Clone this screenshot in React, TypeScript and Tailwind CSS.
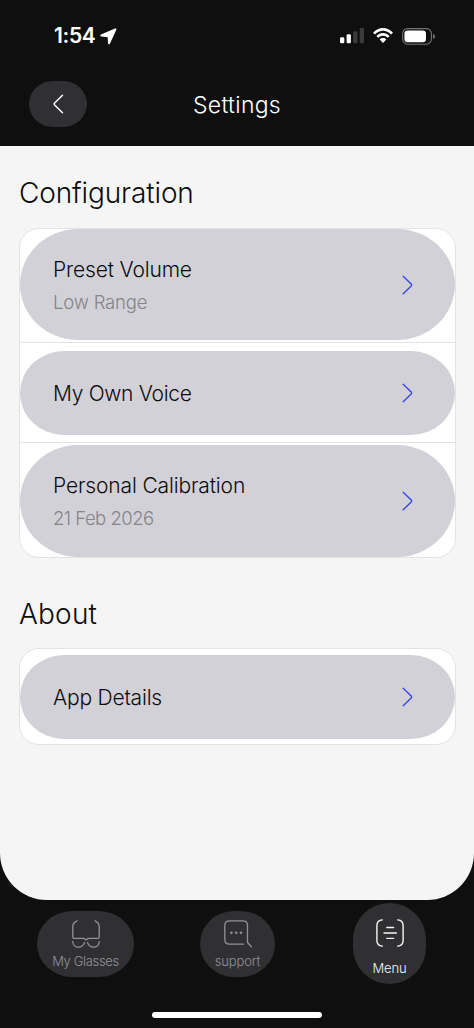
import clsx from 'clsx'
import type { ReactNode } from 'react'

interface RowProps {
  title: string
  detail?: string
  className: string
  titleClass: string
  detailClass?: string
}

function SettingsRow({ title, detail, className, titleClass, detailClass }: RowProps) {
  return (
    <button
      className={clsx(
        'flex w-full shrink-0 items-center justify-between bg-[#d2d1d7] pl-[33px] pr-[42px] text-left',
        className
      )}
    >
      <span className="flex flex-col pt-px">
        <span className={clsx('text-[21px] leading-[26px] whitespace-nowrap text-[#0c0c0e]', titleClass)}>{title}</span>
        {detail && (
          <span className={clsx('mt-[7px] text-[18.5px] leading-[24px] whitespace-nowrap text-[#858488]', detailClass)}>
            {detail}
          </span>
        )}
      </span>
      <svg width="11" height="20" viewBox="0 0 11 20" fill="none" stroke="#3440ee" strokeWidth="1.3" strokeLinecap="round">
        <path d="M1.2 1.2 9.4 9.3Q10 10 9.4 10.7L1.2 18.8" />
      </svg>
    </button>
  )
}

function StatusBar() {
  return (
    <div className="flex h-[72px] items-center justify-between pl-[54px] pr-[39px] text-white">
      <div className="flex items-center gap-[5px]">
        <span className="text-[21px] leading-[24px] font-semibold tracking-[-0.35px]">1:54</span>
        <svg width="17" height="17" viewBox="0 0 17 17" fill="white" stroke="white" strokeWidth="2" strokeLinejoin="round">
          <path d="M15.4 1.3 1.4 7.5 8.6 8.3 9 15.3Z" />
        </svg>
      </div>
      <div className="flex items-center">
        <svg width="24" height="16" viewBox="0 0 24 16" fill="white">
          <rect x="0" y="9.2" width="4.3" height="6.1" rx="1.3" />
          <rect x="6.6" y="6.3" width="4.3" height="9" rx="1.3" />
          <rect x="13.2" y="3.2" width="4.3" height="12.1" rx="1.3" fill="#3b3b3d" />
          <rect x="19.7" y="0" width="4.3" height="15.3" rx="1.3" fill="#3b3b3d" />
        </svg>
        <svg className="ml-[9px]" width="20" height="16" viewBox="0 0 20 16" fill="white">
          <path d="M0 4.8C5.4-1.6 14.6-1.6 20 4.8L18 6.6C13.5 1.6 6.5 1.6 2 6.6Z" />
          <path d="M3.4 8C7 4 13 4 16.6 8L14.7 9.8C12 7 8 7 5.3 9.8Z" />
          <path d="M6.7 11.4C8.4 9.5 11.6 9.5 13.3 11.4L10.5 14.6Q10 15.2 9.5 14.6Z" />
        </svg>
        <svg className="ml-[9px]" width="33" height="17" viewBox="0 0 33 17" fill="none">
          <rect x=".6" y=".6" width="28.8" height="15.6" rx="5" stroke="#747476" strokeWidth="1.1" />
          <rect x="2.4" y="2.6" width="21.6" height="11.6" rx="3.3" fill="white" />
          <path d="M31 6Q33 6.5 33 8.4T31 10.8Z" fill="#747476" />
        </svg>
      </div>
    </div>
  )
}

interface TabProps {
  label: string
  className: string
  labelClass: string
  children: ReactNode
}

function Tab({ label, className, labelClass, children }: TabProps) {
  return (
    <button className={clsx('flex shrink-0 flex-col items-center bg-[#303033]', className)}>
      {children}
      <span className={clsx('text-[13px] leading-[16px] whitespace-nowrap', labelClass)}>{label}</span>
    </button>
  )
}

function TabBar() {
  return (
    <nav className="flex h-[84px] items-center pl-[37px] pt-[3px]">
      <Tab
        label="My Glasses"
        className="h-[66px] w-[97px] rounded-[35px/33px] pt-[9px] text-[#929196]"
        labelClass="mt-[5px] tracking-[-0.35px]"
      >
        <svg width="28" height="28" viewBox="0 0 28 28" fill="none" stroke="currentColor" strokeWidth="1.3" strokeLinecap="round">
          <path d="M5 .8C2.8 1.8.8 4 .8 6.5V17.2Q.8 18.4 2 18.4H11.6Q12.6 18.4 13 19.2Q14 20.2 15 19.2Q15.4 18.4 16.4 18.4H26Q27.2 18.4 27.2 17.2V6.5C27.2 4 25.2 1.8 23 .8" />
          <path d="M.8 21.5C.8 25 3.4 27.2 6.6 27.2 9.8 27.2 11.4 25.4 12.6 22.5M27.2 21.5C27.2 25 24.6 27.2 21.4 27.2 18.2 27.2 16.6 25.4 15.4 22.5" />
        </svg>
      </Tab>
      <Tab
        label="support"
        className="ml-[66px] h-[66px] w-[75px] rounded-[34px/33px] pt-[9px] text-[#929196]"
        labelClass="mt-[5px] tracking-[-0.15px]"
      >
        <svg width="28" height="28" viewBox="0 0 28 28" fill="none" stroke="currentColor" strokeWidth="1.3" strokeLinecap="round">
          <path d="M19.5 24.2H5.5Q.8 24.2.8 19.5V5.5Q.8.8 5.5.8H18.8Q23.5.8 23.5 5.5V22.4L27.4 26.8" />
          <g fill="currentColor" stroke="none">
            <circle cx="7.4" cy="12.8" r="1.3" />
            <circle cx="12.2" cy="12.8" r="1.3" />
            <circle cx="17" cy="12.8" r="1.3" />
          </g>
        </svg>
      </Tab>
      <Tab
        label="Menu"
        className="ml-[78px] h-[81px] w-[73px] rounded-[36.5px] pt-[16px] text-[#f5f5f5]"
        labelClass="mt-[13px] tracking-[-0.1px]"
      >
        <svg width="28" height="28" viewBox="0 0 28 28" fill="none" stroke="currentColor" strokeWidth="1.4" strokeLinecap="round">
          <path d="M6.3.9C2.8 1.2.9 3 .9 6.5V21.5C.9 25 2.8 26.8 6.3 27.1M21.7.9C25.2 1.2 27.1 3 27.1 6.5V21.5C27.1 25 25.2 26.8 21.7 27.1" />
          <path d="M10.8 8.5H17.6M8 14H20.4M10.8 19.4H17.6" />
        </svg>
      </Tab>
    </nav>
  )
}

export default function App() {
  return (
    <div className="flex h-[1028px] w-[474px] flex-col overflow-hidden bg-[#0f0f10] font-['Inter','Liberation_Sans',sans-serif] font-[350]">
      <header className="h-[146px] shrink-0">
        <StatusBar />
        <div className="grid h-[64px] grid-cols-[1fr_auto_1fr] items-center px-[29px]">
          <button className="flex h-[46px] w-[58px] items-center justify-center rounded-[24px/23px] bg-[#303033]">
            <svg width="11" height="20" viewBox="0 0 11 20" fill="none" stroke="white" strokeWidth="1.4" strokeLinecap="round">
              <path d="M9.5 1.2 1.4 9.3Q.8 10 1.4 10.7L9.5 18.8" />
            </svg>
          </button>
          <h1 className="pt-px text-[23px] leading-[28px] tracking-[0.3px] text-white">Settings</h1>
        </div>
      </header>

      <main className="flex h-[754px] shrink-0 flex-col rounded-b-[47px] bg-[#f5f5f5] px-[19px] pt-[29px]">
        <h2 className="text-[28px] leading-[36px] tracking-[-0.13px] text-[#0c0c0e]">Configuration</h2>
        <section className="mt-[17px] flex h-[330px] w-[437px] flex-col overflow-hidden rounded-[20px] border border-[#e3e3e5] bg-white">
          <div className="h-[114px] shrink-0 border-b border-[#e3e3e5]">
            <SettingsRow
              title="Preset Volume"
              detail="Low Range"
              className="h-[111px] rounded-[58px/55.5px]"
              titleClass="tracking-[-0.17px]"
              detailClass="tracking-[-0.18px]"
            />
          </div>
          <div className="flex h-[100px] shrink-0 items-center border-b border-[#e3e3e5]">
            <SettingsRow title="My Own Voice" className="h-[84px] rounded-[44px/42px] pt-px" titleClass="tracking-[-0.3px]" />
          </div>
          <div className="flex flex-1 items-end">
            <SettingsRow
              title="Personal Calibration"
              detail="21 Feb 2026"
              className="h-[112px] rounded-[58px/56px]"
              titleClass="tracking-[-0.15px]"
              detailClass="tracking-[-0.52px]"
            />
          </div>
        </section>

        <h2 className="mt-[38px] text-[28px] leading-[36px] tracking-[0.2px] text-[#0c0c0e]">About</h2>
        <section className="mt-[16px] flex h-[97px] w-[437px] items-center overflow-hidden rounded-[20px] border border-[#e3e3e5] bg-white">
          <SettingsRow title="App Details" className="h-[84px] rounded-[44px/42px] pt-px" titleClass="tracking-[-0.2px]" />
        </section>
      </main>

      <TabBar />
      <div className="mt-[28px] h-[6px] w-[170px] self-center rounded-full bg-white" />
    </div>
  )
}
